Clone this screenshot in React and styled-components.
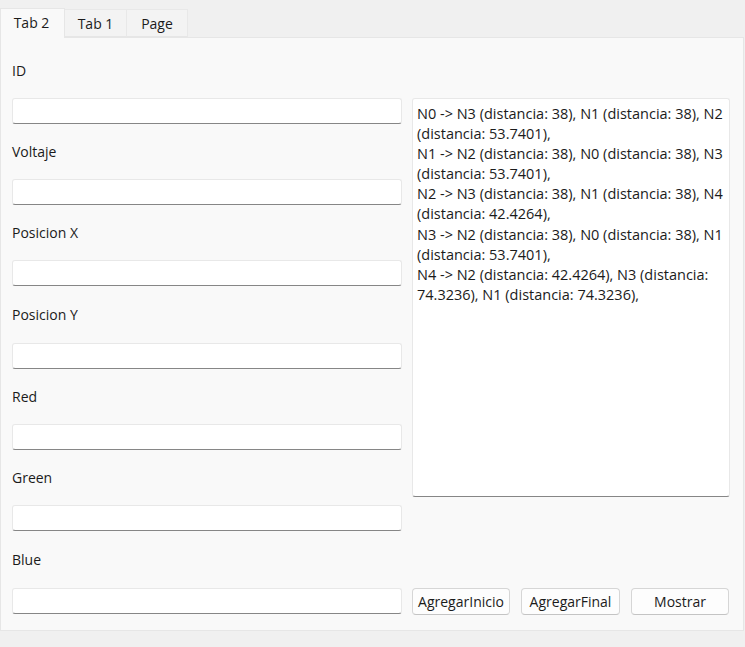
import React, { useState } from "react";
import styled, { createGlobalStyle } from "styled-components";

const GlobalStyle = createGlobalStyle`
  html, body {
    margin: 0;
    padding: 0;
    background: #f0f0f0;
    font-family: "Open Sans", "Noto Sans", sans-serif;
    color: #1b1b1b;
  }
  * { box-sizing: border-box; }
`;

const Window = styled.div`
  width: 745px;
  height: 647px;
  display: flex;
  flex-direction: column;
`;

const TabBar = styled.div`
  height: 37px;
  display: flex;
  align-items: flex-end;
  position: relative;
  z-index: 1;
`;

const Tab = styled.button`
  font: inherit;
  font-size: 14px;
  color: #1b1b1b;
  height: ${(p) => (p.$active ? "30px" : "28px")};
  width: ${(p) => p.$w}px;
  margin-bottom: ${(p) => (p.$active ? "-1px" : "0")};
  padding: 0 ${(p) => (p.$active ? "2px" : "0")} ${(p) => (p.$active ? "2px" : "0")} 0;
  background: ${(p) => (p.$active ? "#f9f9f9" : "#f3f3f3")};
  border: 1px solid ${(p) => (p.$active ? "#e6e6e6" : "#e8e8e8")};
  border-bottom: ${(p) => (p.$active ? "none" : "1px solid #e6e6e6")};
  border-left-width: ${(p) => (p.$first ? "1px" : "0")};
  border-radius: 0;
  cursor: pointer;
`;

const Pane = styled.div`
  width: 744px;
  height: 594px;
  background: #f9f9f9;
  border: 1px solid #e6e6e6;
  padding: 5px 12px 0 11px;
  display: grid;
  grid-template-columns: 390px 318px;
  grid-template-rows: 55px 26px 55px 26px 55px 26px 57px 26px 55px 26px 55px 26px 57px 27px;
  column-gap: 10px;
`;

const Label = styled.div`
  grid-column: 1;
  align-self: center;
  font-size: 14px;
  line-height: 20px;
  padding-top: 1px;
`;

const Input = styled.input`
  grid-column: 1;
  height: 26px;
  width: 100%;
  background: #ffffff;
  border: 1px solid #e8e8e8;
  border-bottom: 1px solid #868686;
  border-radius: 3px;
  outline: none;
  font: inherit;
  font-size: 14px;
  padding: 0 6px;
`;

const Output = styled.div`
  grid-column: 2;
  grid-row: 2 / 13;
  align-self: start;
  height: 399px;
  background: #ffffff;
  border: 1px solid #e8e8e8;
  border-bottom: 1px solid #868686;
  border-radius: 3px;
  padding: 5px 4px;
  font-size: 14.5px;
  line-height: 20.1px;
  color: #1b1b1b;
`;

const Line = styled.div`
  white-space: nowrap;
`;

const ButtonRow = styled.div`
  grid-column: 2;
  grid-row: 14;
  display: flex;
  gap: 11px;
`;

const Button = styled.button`
  width: ${(p) => p.$w}px;
  height: 27px;
  background: #fdfdfd;
  border: 1px solid #d6d6d6;
  border-bottom-color: #c4c4c4;
  border-radius: 4px;
  font: inherit;
  font-size: 14px;
  color: #1b1b1b;
  padding: 0;
  cursor: pointer;
`;

const Footer = styled.div`
  flex: 1;
  background: #f0f0f0;
`;

const fields = ["ID", "Voltaje", "Posicion X", "Posicion Y", "Red", "Green", "Blue"];

const lines = [
  "N0 -> N3 (distancia: 38), N1 (distancia: 38), N2",
  "(distancia: 53.7401),",
  "N1 -> N2 (distancia: 38), N0 (distancia: 38), N3",
  "(distancia: 53.7401),",
  "N2 -> N3 (distancia: 38), N1 (distancia: 38), N4",
  "(distancia: 42.4264),",
  "N3 -> N2 (distancia: 38), N0 (distancia: 38), N1",
  "(distancia: 53.7401),",
  "N4 -> N2 (distancia: 42.4264), N3 (distancia:",
  "74.3236), N1 (distancia: 74.3236),",
];

const tabs = [
  { name: "Tab 2", w: 65 },
  { name: "Tab 1", w: 62 },
  { name: "Page", w: 61 },
];

export default function App() {
  const [active, setActive] = useState(0);

  return (
    <Window>
      <GlobalStyle />
      <TabBar>
        {tabs.map((t, i) => (
          <Tab
            key={t.name}
            $w={t.w}
            $first={i === 0}
            $active={active === i}
            onClick={() => setActive(i)}
          >
            {t.name}
          </Tab>
        ))}
      </TabBar>
      <Pane>
        {fields.map((f) => (
          <React.Fragment key={f}>
            <Label>{f}</Label>
            <Input />
          </React.Fragment>
        ))}
        <Output>
          {lines.map((l, i) => (
            <Line key={i}>{l}</Line>
          ))}
        </Output>
        <ButtonRow>
          <Button $w={98}>AgregarInicio</Button>
          <Button $w={99}>AgregarFinal</Button>
          <Button $w={98}>Mostrar</Button>
        </ButtonRow>
      </Pane>
      <Footer />
    </Window>
  );
}
